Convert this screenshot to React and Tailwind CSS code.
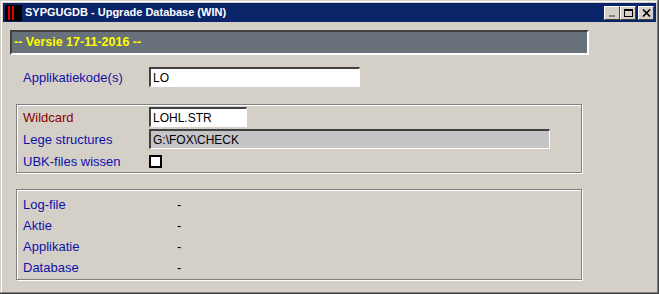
import React from 'react';

const font = { fontFamily: '"Liberation Sans", Arial, sans-serif' };

const Label = ({ children, red }) => (
  <div className={`w-[126px] text-[13px] leading-[15px] ${red ? 'text-[#8b0000]' : 'text-[#1010a8]'}`}>{children}</div>
);

const Sunken = ({ w, grey, children }) => (
  <div className={`${w} h-[20px] border-t-2 border-l-2 border-t-[#404040] border-l-[#404040] border-r border-b border-r-white border-b-white ${grey ? 'bg-[#c4c3c6]' : 'bg-white'} flex items-center pl-[2px] text-[12px] text-black`}>{children}</div>
);

const TitleButton = ({ children, mr }) => (
  <div className={`w-[16px] h-[14px] bg-[#d4d0c8] border border-t-white border-l-white border-r-[#404040] border-b-[#404040] flex items-center justify-center ${mr}`}>{children}</div>
);

export default function App() {
  return (
    <div className="w-[659px] h-[294px] bg-[#d4d0c8] border-r border-b border-r-[#404040] border-b-[#404040]" style={font}>
      <div className="h-full border-t border-l border-t-[#d4d0c8] border-l-[#d4d0c8] border-r border-b border-r-[#808080] border-b-[#808080]">
        <div className="h-full border-t border-l border-t-white border-l-white p-[1px]">
          <div className="h-[19px] bg-[#0a246a] flex items-center">
            <div className="ml-[2px] w-[17px] h-[16px] bg-black flex gap-[2px] pl-[3px] py-[1px]">
              <div className="w-[2px] h-full bg-[#e00000]" />
              <div className="w-[2px] h-full bg-[#e00000]" />
            </div>
            <div className="ml-[3px] text-white font-bold text-[11px] leading-none">SYPGUGDB - Upgrade Database (WIN)</div>
            <div className="ml-auto mr-[2px] flex items-center">
              <TitleButton>
                <div className="w-[6px] h-[2px] bg-[#808080] mt-[6px]" />
              </TitleButton>
              <TitleButton mr="mr-[2px]">
                <div className="w-[9px] h-[8px] border border-black border-t-2" />
              </TitleButton>
              <TitleButton>
                <svg width="9" height="8" viewBox="0 0 9 8">
                  <path d="M1 0.5 L8 7.5 M8 0.5 L1 7.5" stroke="black" strokeWidth="1.6" />
                </svg>
              </TitleButton>
            </div>
          </div>

          <div className="ml-[7px] mt-[8px] w-[579px] h-[25px] bg-[#687079] border-t-2 border-l-2 border-t-[#404040] border-l-[#404040] border-r-2 border-b-2 border-r-white border-b-white flex items-center pl-[2px]">
            <span className="text-[#ffff00] font-bold text-[12.5px]">-- Versie 17-11-2016 --</span>
          </div>

          <div className="ml-[20px] mt-[12px] flex items-center">
            <Label>Applikatiekode(s)</Label>
            <Sunken w="w-[211px]">LO</Sunken>
          </div>

          <div className="ml-[13px] mt-[17px] w-[566px] h-[69px] border border-[#808080] shadow-[1px_1px_0_#ffffff,inset_1px_1px_0_#ffffff] pl-[6px] pt-[2px] flex flex-col gap-[2px]">
            <div className="flex items-center">
              <Label red>Wildcard</Label>
              <Sunken w="w-[98px]">LOHL.STR</Sunken>
            </div>
            <div className="flex items-center">
              <Label>Lege structures</Label>
              <Sunken w="w-[401px]" grey>G:\FOX\CHECK</Sunken>
            </div>
            <div className="flex items-center h-[20px]">
              <Label>UBK-files wissen</Label>
              <div className="w-[13px] h-[13px] border-2 border-black bg-white" />
            </div>
          </div>

          <div className="ml-[13px] mt-[16px] w-[566px] h-[91px] border border-[#808080] shadow-[1px_1px_0_#ffffff,inset_1px_1px_0_#ffffff] pl-[6px] pt-[7px] flex flex-col gap-[6px]">
            {['Log-file', 'Aktie', 'Applikatie', 'Database'].map((l) => (
              <div key={l} className="flex items-center">
                <div className="w-[154px] text-[13px] leading-[15px] text-[#1010a8]">{l}</div>
                <div className="text-[13px] leading-[15px] text-black">-</div>
              </div>
            ))}
          </div>
        </div>
      </div>
    </div>
  );
}
